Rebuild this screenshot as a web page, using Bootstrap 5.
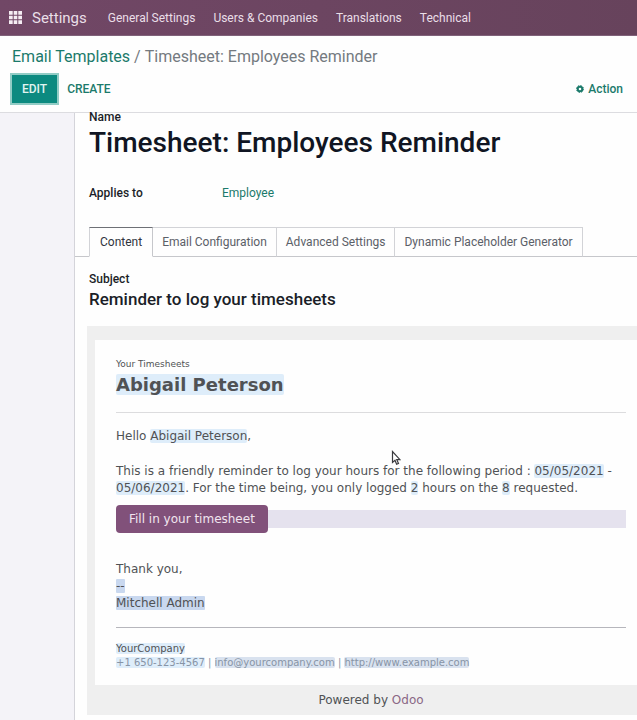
<!DOCTYPE html>
<html lang="en">
<head>
<meta charset="utf-8">
<meta name="viewport" content="width=device-width, initial-scale=1">
<title>Email Templates - Settings</title>
<link href="https://cdn.jsdelivr.net/npm/bootstrap@5.3.0/dist/css/bootstrap.min.css" rel="stylesheet">
<style>
body { font-family: Roboto, "Liberation Sans", sans-serif; font-size: 12px; line-height: 16px; color: #1b1e28; background: #f4f3f8; overflow-x: hidden; }
a { text-decoration: none; color: #1b7a6b; }
.topbar { height: 36px; background: linear-gradient(90deg, #714766, #67435c); border-bottom: 1px solid #80627a; padding: 0 9px; }
.topbar a { color: #eadfe8; }
.topbar .app-name { font-size: 15px; margin: 0 21px 0 10px; }
.topbar .menu-links { gap: 18px; }
.control-panel { background: #fefefe; border-bottom: 1px solid #dcdce0; padding: 9px 14px 9px 12px; }
.crumbs { font-size: 16px; line-height: 24px; color: #747a80; margin-bottom: 6px; }
.crumbs ol { --bs-breadcrumb-divider-color: #747a80; --bs-breadcrumb-item-padding-x: 4px; --bs-breadcrumb-item-active-color: #747a80; font-size: 16px; }
.action-btn { font-size: 12px; line-height: 16px; font-weight: 500; padding: 6px 10px; border: 0; border-radius: 0; color: #1b7a6b; }
.edit-btn, .edit-btn:hover { background: #0c8a80; color: #e0f4f1; box-shadow: 0 0 0 2px #92ccc5; }
.sheet { margin-left: 74px; background: #fefefe; border-left: 1px solid #d4d4da; padding-bottom: 4px; }
.field-label { font-weight: 500; }
.name-label { line-height: 8px; }
.record-title { font-size: 28px; line-height: 36px; font-weight: 500; margin: 4px 0 24px; color: #101523; }
.sheet-pad { padding-left: 14px; }
.label-col { width: 133px; }
.nav-tabs { --bs-nav-tabs-border-color: #c6c7cb; padding-left: 14px; margin-top: 26px; }
.nav-tabs .nav-link { border: 1px solid #d2d3d7; border-left-width: 0; border-bottom-color: #c6c7cb; border-radius: 0; padding: 6px 9px; line-height: 16px; color: #5b6068; }
.nav-tabs .nav-link.active { border-left-width: 1px; border-color: #6e7076 #c6c7cb #fefefe #d2d3d7; background: #fefefe; color: #30343d; padding: 6px 10px; }
.subject-block { padding-top: 14px; }
.subject-line { font-size: 17px; line-height: 24px; font-weight: 500; margin: 0 0 15px; color: #1b1e28; }
.mail-frame { margin-left: 12px; padding: 14px 0 0 8px; background: #efefef; font-family: "DejaVu Sans", sans-serif; font-size: 12px; line-height: 17px; color: #505255; }
.mail-page { background: #fefefe; padding: 17px 11px 15px 21px; }
.mail-kicker { font-size: 9px; line-height: 14px; }
.mail-name { font-size: 18px; line-height: 28px; font-weight: 700; margin: 0 0 13px; }
.hl { background: #deedfa; border-radius: 2px; color: inherit; }
.hl-deep { background: #c9d8ef; border-radius: 1px; }
.rule { height: 1px; border: 0; opacity: 1; margin: 0; background: #dcdcde; }
.rule-dark { background: #b6b6bc; margin-top: 15px; }
.greeting { margin: 15px 0 18px; }
.fill-strip { margin: 8px 0 28px; background: linear-gradient(#e5e2ee, #e5e2ee) center / 100% 18px no-repeat; }
.fill-btn, .fill-btn:hover { background: #81517a; color: #f1e5ef; font-size: 12px; line-height: 16px; padding: 6px 13px; border: 0; border-radius: 4px; }
.mail-contact { font-size: 10px; line-height: 14px; margin-top: 14px; }
.mail-contact .muted-row, .mail-contact a { color: #8794a6; }
.mail-contact .link-hl { background: #d9e2ef; }
.mail-foot { padding: 7px 11px 6px 21px; }
.mail-foot a { color: #8a6785; }
.pointer { position: absolute; left: 391px; top: 450px; }
</style>
<script src="https://cdn.jsdelivr.net/npm/bootstrap@5.3.0/dist/js/bootstrap.bundle.min.js"></script>
</head>
<body class="d-flex flex-column min-vh-100">
<nav class="topbar d-flex align-items-center" aria-label="Main">
  <a href="#" class="d-flex" aria-label="Apps">
    <svg width="13" height="13" viewBox="0 0 13 13" fill="#f5edf3"><path d="M0 0h3.700v3.700H0zM4.700 0h3.600v3.700H4.700zM9.300 0H13v3.700H9.300zM0 4.700h3.700v3.600H0zM4.700 4.700h3.600v3.600H4.700zM9.300 4.700H13v3.600H9.300zM0 9.300h3.700V13H0zM4.700 9.300h3.600V13H4.700zM9.300 9.300H13V13H9.300z"/></svg>
  </a>
  <a href="#" class="app-name">Settings</a>
  <div class="menu-links d-flex">
    <a href="#">General Settings</a>
    <a href="#">Users &amp; Companies</a>
    <a href="#">Translations</a>
    <a href="#">Technical</a>
  </div>
</nav>
<header class="control-panel">
  <nav class="crumbs" aria-label="Breadcrumb">
    <ol class="breadcrumb mb-0">
      <li class="breadcrumb-item"><a href="#">Email Templates</a></li>
      <li class="breadcrumb-item active" aria-current="page">Timesheet: Employees Reminder</li>
    </ol>
  </nav>
  <div class="d-flex align-items-center">
    <button type="button" class="btn action-btn edit-btn">EDIT</button>
    <button type="button" class="btn action-btn">CREATE</button>
    <button type="button" class="btn action-btn ms-auto px-0 d-flex align-items-center gap-1">
      <svg width="8" height="8" viewBox="0 0 8 8" fill="none" stroke="#1b7a6b"><circle cx="4" cy="4" r="2.300" stroke-width="2"/><circle cx="4" cy="4" r="3.500" stroke-width="1" stroke-dasharray="1.400 1.350"/></svg>Action
    </button>
  </div>
</header>
<main class="sheet flex-grow-1">
  <div class="sheet-pad">
    <div class="field-label name-label">Name</div>
    <h1 class="record-title">Timesheet: Employees Reminder</h1>
    <div class="d-flex">
      <div class="label-col field-label">Applies to</div>
      <a href="#">Employee</a>
    </div>
  </div>
  <ul class="nav nav-tabs flex-nowrap text-nowrap">
    <li class="nav-item"><a class="nav-link active" href="#" aria-current="page">Content</a></li>
    <li class="nav-item"><a class="nav-link" href="#">Email Configuration</a></li>
    <li class="nav-item"><a class="nav-link" href="#">Advanced Settings</a></li>
    <li class="nav-item"><a class="nav-link" href="#">Dynamic Placeholder Generator</a></li>
  </ul>
  <div class="sheet-pad subject-block">
    <div class="field-label">Subject</div>
    <h2 class="subject-line">Reminder to log your timesheets</h2>
  </div>
  <section class="mail-frame">
    <article class="mail-page">
      <div class="mail-kicker">Your Timesheets</div>
      <h3 class="mail-name"><span class="hl">Abigail Peterson</span></h3>
      <hr class="rule">
      <p class="greeting">Hello <span class="hl">Abigail Peterson</span>,</p>
      <p class="mb-0">This is a friendly reminder to log your hours for the following period : <span class="hl">05/05/2021</span> - <span class="hl">05/06/2021</span>. For the time being, you only logged <span class="hl">2</span> hours on the <span class="hl">8</span> requested.</p>
      <div class="fill-strip"><button type="button" class="btn fill-btn">Fill in your timesheet</button></div>
      <div>Thank you,</div>
      <div><span class="hl-deep">--</span></div>
      <div><span class="hl-deep">Mitchell Admin</span></div>
      <hr class="rule rule-dark">
      <div class="mail-contact">
        <div><span class="hl">YourCompany</span></div>
        <div class="muted-row"><span class="hl">+1 650-123-4567</span> | <a href="#" class="hl link-hl">info@yourcompany.com</a> | <a href="#" class="hl link-hl">http://www.example.com</a></div>
      </div>
    </article>
    <footer class="mail-foot text-center">Powered by <a href="#">Odoo</a></footer>
  </section>
</main>
<svg class="pointer" width="10" height="16" viewBox="0 0 10 16" fill="#fff" stroke="#3a3a3e" stroke-width="1.200" aria-hidden="true"><path d="M1.500 1.500v11l2.500-2.300 1.600 4 1.900-.8-1.700-3.700H9z"/></svg>
</body>
</html>
